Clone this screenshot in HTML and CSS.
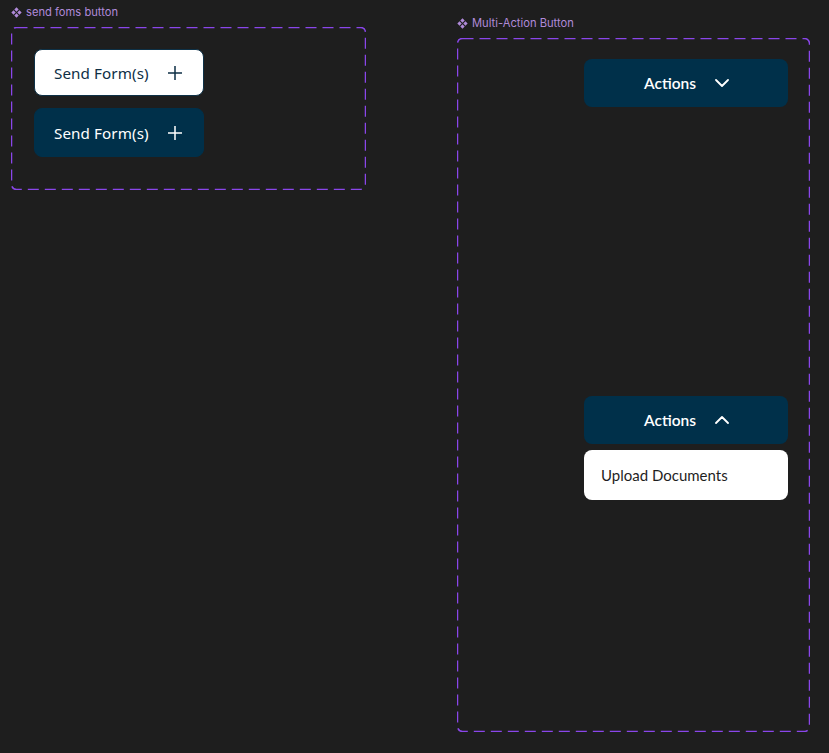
FILE: index.html
```html
<!DOCTYPE html>
<html lang="en">
<head>
<meta charset="utf-8">
<title>Buttons</title>
<link rel="stylesheet" href="styles.css">
</head>
<body>
<div class="canvas">
  <section class="group group-left">
    <div class="label"><svg class="comp-icon" viewBox="0 0 10 10"><path d="M5 0.3 L7 2.3 L5 4.3 L3 2.3Z M5 5.7 L7 7.7 L5 9.7 L3 7.7Z M2.3 3 L4.3 5 L2.3 7 L0.3 5Z M7.7 3 L9.7 5 L7.7 7 L5.7 5Z"/></svg>send foms button</div>
    <div class="frame frame-left">
      <svg class="dash" width="355" height="163"><rect x="0.5" y="0.5" width="354" height="162" rx="5" ry="5"/></svg>
      <button class="btn btn-light">Send Form(s)<svg class="plus" viewBox="0 0 16 16"><path d="M8 1 V15 M1 8 H15"/></svg></button>
      <button class="btn btn-dark">Send Form(s)<svg class="plus" viewBox="0 0 16 16"><path d="M8 1 V15 M1 8 H15"/></svg></button>
    </div>
  </section>
  <section class="group group-right">
    <div class="label"><svg class="comp-icon" viewBox="0 0 10 10"><path d="M5 0.3 L7 2.3 L5 4.3 L3 2.3Z M5 5.7 L7 7.7 L5 9.7 L3 7.7Z M2.3 3 L4.3 5 L2.3 7 L0.3 5Z M7.7 3 L9.7 5 L7.7 7 L5.7 5Z"/></svg>Multi-Action Button</div>
    <div class="frame frame-right">
      <svg class="dash" width="353" height="694"><rect x="0.5" y="0.5" width="352" height="693" rx="5" ry="5"/></svg>
      <div class="menu">
        <button class="actions">Actions<svg class="chev" viewBox="0 0 14 8"><path d="M1 1 L7 7 L13 1"/></svg></button>
      </div>
      <div class="menu menu-open">
        <button class="actions">Actions<svg class="chev" viewBox="0 0 14 8"><path d="M1 7 L7 1 L13 7"/></svg></button>
        <div class="dropdown">Upload Documents</div>
      </div>
    </div>
  </section>
</div>
</body>
</html>
```
FILE: styles.css
```css
html, body {
  margin: 0;
  padding: 0;
  background: #1e1e1e;
}
.canvas {
  display: flex;
  align-items: flex-start;
  width: 829px;
  height: 753px;
  overflow: hidden;
}
.group {
  display: flex;
  flex-direction: column;
}
.group-left {
  margin-left: 11px;
  padding-top: 5px;
}
.group-right {
  margin-left: 91px;
  padding-top: 16px;
}
.label {
  display: flex;
  align-items: center;
  gap: 4px;
  height: 14px;
  margin-bottom: 8px;
  font-family: "Inter", "Liberation Sans", sans-serif;
  font-size: 11.2px;
  color: #b08ad9;
  white-space: nowrap;
}
.comp-icon {
  width: 11px;
  height: 11px;
  fill: #b08ad9;
}
.frame {
  position: relative;
  box-sizing: border-box;
}
.dash {
  position: absolute;
  left: 0;
  top: 0;
  pointer-events: none;
}
.dash rect {
  fill: none;
  stroke: #8a46ea;
  stroke-width: 1.5;
  stroke-dasharray: 11 6;
}
.frame-left {
  width: 355px;
  height: 163px;
  padding: 22px 0 0 23px;
  display: flex;
  flex-direction: column;
  align-items: flex-start;
  gap: 12px;
}
.btn {
  box-sizing: border-box;
  width: 170px;
  height: 47px;
  border-radius: 8px;
  display: flex;
  align-items: center;
  padding: 0 0 0 19px;
  gap: 18px;
  font-family: "Noto Sans", "Open Sans", sans-serif;
  font-size: 15.2px;
  letter-spacing: 0.1px;
  cursor: pointer;
}
.btn-light {
  background: #ffffff;
  color: #0e2f45;
  border: 1px solid #0e3147;
}
.btn-dark {
  background: #00304a;
  color: #ffffff;
  border: 1px solid #00304a;
  height: 49px;
}
.plus {
  width: 16px;
  height: 16px;
  fill: none;
  stroke: currentColor;
  stroke-width: 1.5;
}
.frame-right {
  width: 353px;
  height: 694px;
  padding: 21px 0 0 127px;
}
.menu {
  display: flex;
  flex-direction: column;
  gap: 6px;
  width: 204px;
}
.menu-open {
  margin-top: 289px;
}
.actions {
  box-sizing: border-box;
  width: 204px;
  height: 48px;
  border: none;
  border-radius: 8px;
  background: #00304a;
  color: #ffffff;
  display: flex;
  align-items: center;
  justify-content: center;
  gap: 19px;
  padding: 0 0 0 1px;
  font-family: "Lato", "Liberation Sans", sans-serif;
  font-weight: 600;
  font-size: 15.5px;
  cursor: pointer;
}
.chev {
  width: 14px;
  height: 8px;
  fill: none;
  stroke: #ffffff;
  stroke-width: 1.8;
  stroke-linecap: round;
  stroke-linejoin: round;
}
.dropdown {
  box-sizing: border-box;
  height: 50px;
  border-radius: 8px;
  background: #ffffff;
  color: #1f1f1f;
  display: flex;
  align-items: center;
  padding-left: 17px;
  font-family: "Lato", "Liberation Sans", sans-serif;
  font-size: 15px;
}
```
